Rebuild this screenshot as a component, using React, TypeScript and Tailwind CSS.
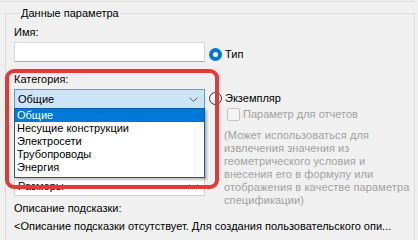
import { ReactNode } from "react";

const font = { fontFamily: '"Liberation Sans", Arial, sans-serif' };

function Chevron() {
  return (
    <svg width="9" height="5" viewBox="0 0 9 5" className="shrink-0">
      <path d="M0.5 0.5 L4.5 4.5 L8.5 0.5" fill="none" stroke="#606060" strokeWidth="1" />
    </svg>
  );
}

function Radio({ checked, children }: { checked?: boolean; children: ReactNode }) {
  return (
    <div className="flex items-center gap-[3px]">
      {checked ? (
        <span className="flex h-[13px] w-[13px] items-center justify-center rounded-full bg-[#0078d7]">
          <span className="h-[5px] w-[5px] rounded-full bg-white" />
        </span>
      ) : (
        <span className="h-[13px] w-[13px] rounded-full border border-[#333333] bg-white" />
      )}
      <span className="leading-[15px] text-black">{children}</span>
    </div>
  );
}

const options = ["Общие", "Несущие конструкции", "Электросети", "Трубопроводы", "Энергия"];

export default function App() {
  return (
    <div
      className="relative h-[240px] w-[418px] overflow-hidden bg-[#f0f0f0] text-[11px] text-black"
      style={font}
    >
      <div className="h-[2px] w-[414px] border-b border-r border-[#dcdcdc]" />

      <fieldset className="ml-[5px] mt-[4px] w-[410px] border border-[#dcdcdc] pb-[20px] pl-[8px]">
        <legend className="ml-[6px] px-[1px] leading-[15px]">Данные параметра</legend>

        <div className="flex">
          <div className="w-[191px] shrink-0">
            <div className="mt-[4px] leading-[15px]">Имя:</div>
            <div className="mt-[2px] h-[20px] w-[191px] border border-[#d6d6d6] border-b-[#a8a8a8] bg-white" />

            <div className="mt-[10px] leading-[15px]">Категория:</div>
            <div className="relative mt-[2px]">
              <div className="flex h-[20px] w-[191px] items-center justify-between border border-[#569de5] bg-[#cce4f7] pl-[3px] pr-[6px]">
                <span className="leading-[15px]">Общие</span>
                <Chevron />
              </div>
              <div className="absolute left-0 top-[19px] z-10 w-[191px] border border-[#0b5cab] bg-white shadow-[2px_2px_2px_rgba(0,0,0,0.25)]">
                {options.map((o, i) => (
                  <div
                    key={o}
                    className={
                      "h-[13px] pl-[2px] leading-[13px] " +
                      (i == 0 ? "bg-[#0078d7] text-white" : "text-black")
                    }
                  >
                    {o}
                  </div>
                ))}
                <div className="h-[3px]" />
              </div>
            </div>

            <div className="mt-[67px] flex h-[20px] w-[191px] items-center justify-between border border-[#d0d0d0] bg-[#fdfdfd] pl-[3px] pr-[6px]">
              <span className="leading-[15px]">Размеры</span>
              <Chevron />
            </div>

            <div className="mt-[5px] leading-[15px]">Описание подсказки:</div>
          </div>

          <div className="ml-[4px] flex-1">
            <div className="mt-[26px]">
              <Radio checked>Тип</Radio>
            </div>
            <div className="mt-[29px]">
              <Radio>Экземпляр</Radio>
            </div>
            <div className="ml-[18px] mt-[1px] flex items-center gap-[3px]">
              <span className="h-[13px] w-[13px] rounded-[2px] border border-[#c4c4c4] bg-[#f4f4f4]" />
              <span className="leading-[15px] text-[#a0a0a0]">Параметр для отчетов</span>
            </div>
            <div className="ml-[15px] mt-[7px] leading-[13px] tracking-[0.1px] text-[#a0a0a0]">
              (Может использоваться для
              <br />
              извлечения значения из
              <br />
              геометрического условия и
              <br />
              внесения его в формулу или
              <br />
              отображения в качестве параметра
              <br />
              спецификации)
            </div>
          </div>
        </div>

        <div className="mt-[3px] whitespace-nowrap leading-[15px]">
          &lt;Описание подсказки отсутствует. Для создания пользовательского опи...
        </div>
      </fieldset>

      <div className="pointer-events-none absolute left-[5px] top-[69px] z-20 h-[120px] w-[214px] rounded-[9px] border-[4px] border-[#e53a33]" />
    </div>
  );
}
